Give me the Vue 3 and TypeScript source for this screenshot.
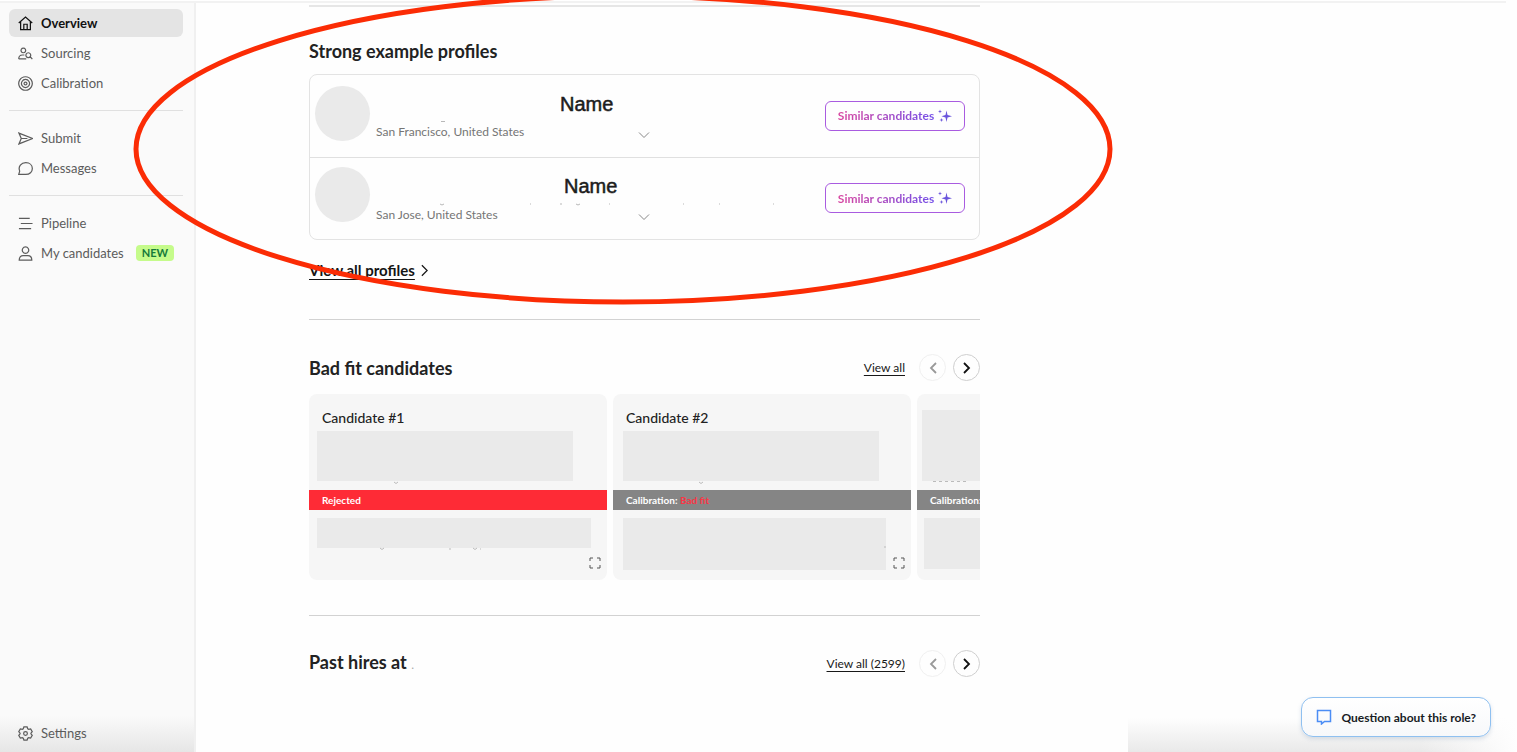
<script setup lang="ts">
interface NavItem { label: string; icon: string; active?: boolean; badge?: string }
interface Profile { id: string; location: string }
interface Candidate { id: string; title?: string; status: string; verdict?: string; rejected?: boolean }

const groups: NavItem[][] = [
  [
    { label: 'Overview', icon: 'home', active: true },
    { label: 'Sourcing', icon: 'sourcing' },
    { label: 'Calibration', icon: 'target' },
  ],
  [
    { label: 'Submit', icon: 'send' },
    { label: 'Messages', icon: 'chat' },
  ],
  [
    { label: 'Pipeline', icon: 'lines' },
    { label: 'My candidates', icon: 'person', badge: 'NEW' },
  ],
]

const icons: Record<string, string> = {
  home: 'M.8 7.500 8 1.200l7.200 6.300M2.800 6v8.500h10.400V6M6.200 14.500V8.800h3.600v5.700',
  sourcing: 'M5.700 2.200a2.500 2.500 0 1 0 .01 0M.8 13.800h8M.8 13.800c0-3 1.500-4.200 4-4.200h2M11 7.200a2.600 2.600 0 1 0 .01 0M13 11.500l2.300 2.500',
  target: 'M8 .8a7.200 7.200 0 1 0 .01 0M8 3.700a4.300 4.300 0 1 0 .01 0M8 6.500a1.500 1.500 0 1 0 .01 0',
  send: 'M1 2.200 15.500 8 1 13.800 3.500 8zM3.500 8h6.500',
  chat: 'M.8 14.300 1.800 10.800C-.2 6 3.500 1.800 8.300 1.800c4.200 0 7 2.700 7 6.200s-2.800 6.300-7 6.300z',
  lines: 'M1 2.500h11.500M3 8h12.500M1 13.500h13',
  person: 'M8 1a3.400 3.400 0 1 0 .01 0M1.300 15c0-3.200 1.800-4.800 4.200-4.800h5c2.400 0 4.200 1.600 4.200 4.800z',
}

const profiles: Profile[] = [
  { id: 'first', location: 'San Francisco, United States' },
  { id: 'second', location: 'San Jose, United States' },
]

const candidates: Candidate[] = [
  { id: 'one', title: 'Candidate #1', status: 'Rejected', rejected: true },
  { id: 'two', title: 'Candidate #2', status: 'Calibration:', verdict: 'Bad fit' },
  { id: 'three', status: 'Calibration:' },
]
</script>

<template>
  <div class="page">
    <div class="topline"></div>
    <div class="shell">
      <aside class="sidebar">
        <nav>
          <ul v-for="(group, g) in groups" :key="g" class="group">
            <li v-for="item in group" :key="item.label">
              <a href="#" class="nav-item" :class="{ active: item.active }">
                <svg class="nav-icon" viewBox="0 0 16 16"><path :d="icons[item.icon]" /></svg>
                <span>{{ item.label }}</span>
                <span v-if="item.badge" class="badge">{{ item.badge }}</span>
              </a>
            </li>
          </ul>
        </nav>
        <a href="#" class="nav-item settings">
          <svg class="nav-icon" viewBox="0 0 16 16">
            <path d="M6.300 1h3.400l.7 2 1 .6 2.100-.4 1.700 2.900L13.800 7.700v.6l1.400 1.600-1.700 2.900-2.100-.4-1 .6-.7 2H6.300l-.7-2-1-.6-2.100.4L.8 9.900l1.400-1.600v-.6L.8 6.100l1.700-2.900 2.100.4 1-.6z" />
            <circle cx="8" cy="8" r="2" />
          </svg>
          <span>Settings</span>
        </a>
      </aside>

      <main class="content">
        <section class="block first-block">
          <h2>Strong example profiles</h2>
          <ul class="profiles">
            <li v-for="p in profiles" :key="p.id" class="profile" :class="p.id">
              <span class="avatar"></span>
              <div class="details">
                <strong class="name">Name</strong>
                <span class="location">{{ p.location }}</span>
                <button class="expand" type="button" aria-label="Expand profile">
                  <svg viewBox="0 0 12 12"><path d="M1 3.500 6 8.500l5-5" /></svg>
                </button>
              </div>
              <button class="similar" type="button">
                <span>Similar candidates</span>
                <svg viewBox="0 0 14 14">
                  <path d="M8.500 1.500 9.500 6 14 7.200 9.500 8.400 8.500 13 7.500 8.400 3.500 7.200 7.500 6z" />
                  <path d="M2 .5 2.500 2 4 2.500 2.500 3 2 4.500 1.500 3 0 2.500 1.500 2z" />
                  <path d="M3.500 9 4 10.500 5.500 11 4 11.500 3.500 13 3 11.500 1.500 11 3 10.500z" />
                </svg>
              </button>
              <svg v-if="p.id === 'first'" class="trace" viewBox="0 0 400 4"><path d="M65 1.500h4" /></svg>
              <svg v-else class="trace" viewBox="0 0 400 4"><path d="M64 1q2 2 4 0M154 1h1M184 1h2M200 1q2 2 4 0M233 1h1M307 1h1M343 1h1M397 1h1" /></svg>
            </li>
          </ul>
          <a href="#" class="all-profiles">
            <span>View all profiles</span>
            <svg viewBox="0 0 8 14"><path d="M1 1l6 6-6 6" /></svg>
          </a>
        </section>

        <section class="block">
          <header class="head">
            <h2>Bad fit candidates</h2>
            <a href="#" class="view-all">View all</a>
            <button class="round muted" type="button" aria-label="Previous candidates"><svg viewBox="0 0 8 12"><path d="M7 1 2 6l5 5" /></svg></button>
            <button class="round" type="button" aria-label="Next candidates"><svg viewBox="0 0 8 12"><path d="M1 1l5 5-5 5" /></svg></button>
          </header>
          <div class="cards">
            <article v-for="c in candidates" :key="c.id" class="card" :class="c.id">
              <div class="upper">
                <h3 v-if="c.title">{{ c.title }}</h3>
                <div class="bar summary"></div>
              </div>
              <p class="status" :class="{ rejected: c.rejected }">{{ c.status }} <em v-if="c.verdict">{{ c.verdict }}</em></p>
              <div class="bar notes"></div>
              <svg v-if="c.id === 'one'" class="marks" viewBox="0 0 298 80"><path d="M85 1q2 3 4 0M71 67q2 3 4 0M140 68h2M164 67q2 3 4 0M171 68h1" /></svg>
              <svg v-else-if="c.id === 'two'" class="marks" viewBox="0 0 298 80"><path d="M86 1q2 3 4 0M272 65v2" /></svg>
              <svg v-else class="marks" viewBox="0 0 298 80"><path d="M16 .5h36" stroke-dasharray="3 3" /></svg>
              <button class="full" type="button" aria-label="Open candidate">
                <svg viewBox="0 0 12 12"><path d="M1 4V1h3M8 1h3v3M11 8v3H8M4 11H1V8" /></svg>
              </button>
            </article>
          </div>
        </section>

        <section class="block">
          <header class="head">
            <h2>Past hires at <span class="dot">.</span></h2>
            <a href="#" class="view-all">View all (2599)</a>
            <button class="round muted" type="button" aria-label="Previous hires"><svg viewBox="0 0 8 12"><path d="M7 1 2 6l5 5" /></svg></button>
            <button class="round" type="button" aria-label="Next hires"><svg viewBox="0 0 8 12"><path d="M1 1l5 5-5 5" /></svg></button>
          </header>
        </section>
      </main>
    </div>

    <div class="corner-shade"></div>
    <button class="question" type="button">
      <svg viewBox="0 0 16 16"><path d="M1.500 1.500h13v11H8.500L5.500 15v-2.500h-4z" /></svg>
      <span>Question about this role?</span>
    </button>
    <svg class="highlight" viewBox="0 0 984 312"><ellipse cx="492" cy="156" rx="487" ry="153" /></svg>
  </div>
</template>

<style>
body { background: #fefefe; }
</style>

<style scoped>
* { box-sizing: border-box; }
.page {
  position: relative;
  min-height: 100vh;
  overflow: hidden;
  color: #222;
  font-family: Lato, "Liberation Sans", sans-serif;
  font-size: 14px;
}
ul { list-style: none; margin: 0; padding: 0; }
h2, h3, p { margin: 0; }
a { color: inherit; }
button { font: inherit; color: inherit; padding: 0; border: 0; background: none; cursor: pointer; }
svg { display: block; fill: none; stroke: currentColor; }
.topline { height: 3px; margin-right: 11px; border-top: 1px solid #fff; background: #f2f2f2; }
.shell { display: flex; min-height: calc(100vh - 3px); }

.sidebar {
  display: flex;
  flex: none;
  flex-direction: column;
  justify-content: space-between;
  width: 196px;
  padding: 6px 11px 5px 9px;
  border-right: 2px solid #f0f0f0;
  background: linear-gradient(to top, #e6e6e6, rgba(250, 250, 250, 0) 36px) #fafafa;
}
.group { display: grid; gap: 2px; }
.group + .group { margin-top: 13px; padding-top: 13px; border-top: 1px solid #e0e0e0; }
.nav-item {
  display: flex;
  align-items: center;
  gap: 8px;
  height: 28px;
  padding: 0 8px 0 9px;
  border-radius: 6px;
  color: #5c5c5c;
  font-size: 13px;
  line-height: 16px;
  text-decoration: none;
  white-space: nowrap;
}
.nav-item.active { background: #e4e4e4; color: #111; font-weight: 700; }
.nav-icon { flex: none; width: 15px; height: 15px; stroke-width: 1.3; }
.badge {
  margin-left: 4px;
  padding: 0 6px;
  border-radius: 4px;
  background: #c5fb8b;
  color: #167a3a;
  font-size: 11px;
  font-weight: 700;
  line-height: 16px;
}

.content { flex: 0 1 784px; min-width: 0; padding: 2px 0 0 113px; }
.block { border-top: 1px solid #d2d2d2; }
.first-block { height: 314px; border-top: 2px solid #e6e6e6; }
h2 { font-size: 18px; font-weight: 700; line-height: 24px; }
.first-block h2 { padding-top: 32px; }
.profiles { margin-top: 11px; border: 1px solid #e3e3e3; border-radius: 8px; }
.profile {
  position: relative;
  display: grid;
  grid-template-columns: 55px minmax(0, 1fr) 140px;
  column-gap: 6px;
  align-items: center;
  height: 82px;
  padding: 0 14px 1px 5px;
}
.profile + .profile { border-top: 1px solid #e0e0e0; }
.avatar { align-self: start; width: 55px; height: 55px; margin-top: 11px; border-radius: 50%; background: #eaeaea; }
.second .avatar { margin-top: 9px; }
.details { display: grid; grid-template-columns: 184px 1fr; grid-template-rows: 28px 28px; align-items: center; padding-top: 4px; }
.name { grid-column: 2; color: #1c1c1c; font: 400 20px/28px "Liberation Sans", sans-serif; -webkit-text-stroke: 0.5px; }
.second .name { margin-left: 4px; }
.location { grid-column: 1; color: #757575; font-size: 12px; white-space: nowrap; }
.expand { width: 12px; height: 12px; margin: 6px 0 0 78px; color: #888; }
.similar {
  display: flex;
  align-items: center;
  justify-content: center;
  gap: 4px;
  height: 30px;
  border: 1px solid #a95be0;
  border-radius: 6px;
  font-size: 12px;
  font-weight: 700;
}
.similar span { background: linear-gradient(90deg, #d946a0, #7450e8); background-clip: text; color: transparent; }
.similar svg { width: 14px; height: 14px; fill: #6a55dc; stroke: none; }
.trace { position: absolute; left: 66px; top: 45px; width: 400px; height: 4px; color: #b8b8b8; }
.all-profiles { display: inline-flex; align-items: center; gap: 6px; margin-top: 19px; color: #151515; font-size: 15px; font-weight: 700; line-height: 22px; text-decoration: none; }
.all-profiles span { text-decoration: underline; text-underline-offset: 3px; }
.all-profiles svg { width: 7px; height: 13px; stroke-width: 1.4; }

.head { display: flex; align-items: center; height: 27px; margin-top: 34px; }
.head h2 { margin-right: auto; }
.dot { color: #aaa; font-size: 12px; font-weight: 400; }
.view-all { margin-right: 14px; color: #181818; font-size: 12px; text-underline-offset: 3px; }
.round {
  display: grid;
  place-items: center;
  width: 27px;
  height: 27px;
  border: 1px solid #cfcfcf;
  border-radius: 50%;
  color: #111;
}
.round.muted { margin-right: 7px; border-color: #f0f0f0; color: #999; }
.round svg { width: 8px; height: 12px; stroke-width: 1.8; }

.cards { display: flex; gap: 6px; margin: 13px 0 35px; overflow: hidden; }
.card { position: relative; flex: 0 0 298px; height: 186px; border-radius: 8px; background: #f6f6f6; }
.upper { display: flex; flex-direction: column; justify-content: flex-end; gap: 3px; height: 96px; padding-bottom: 9px; }
h3 { padding-left: 13px; font-size: 14px; font-weight: 500; line-height: 20px; }
.bar { width: 256px; height: 50px; margin-left: 8px; background: #eaeaea; }
.status { height: 20px; padding-left: 13px; background: #858585; color: #fff; font-size: 10px; font-weight: 700; line-height: 20px; }
.status.rejected { background: #fe2b36; }
.status em { color: #fb3545; font-style: normal; }
.notes { width: 274px; height: 30px; margin-top: 8px; }
.two .bar { margin-left: 10px; }
.two .notes { width: 263px; height: 52px; }
.three .summary { height: 71px; margin-left: 5px; }
.three .notes { height: 51px; margin-left: 7px; }
.marks { position: absolute; left: 0; top: 87px; width: 298px; height: 80px; color: #bbb; }
.full { position: absolute; right: 6px; bottom: 11px; width: 12px; height: 12px; color: #555; }

.corner-shade {
  position: absolute;
  right: 0;
  bottom: 0;
  width: 389px;
  height: 34px;
  background: linear-gradient(to right, rgba(254, 254, 254, 0) 75%, #fefefe), linear-gradient(to top, #e9e9e9, #fefefe);
}
.question {
  position: absolute;
  right: 26px;
  bottom: 15px;
  display: flex;
  align-items: center;
  gap: 9px;
  height: 40px;
  padding: 0 14px;
  border: 1px solid #8fc0f0;
  border-radius: 12px;
  background: linear-gradient(#fff, #f7f8fa);
  box-shadow: 0 2px 4px rgba(90, 120, 160, 0.2);
  color: #171b24;
  font-size: 12px;
  font-weight: 700;
}
.question svg { width: 16px; height: 16px; color: #4b8df5; stroke-width: 1.5; }
.highlight { position: absolute; left: 131px; top: -7px; width: 984px; height: 312px; color: #fb2c05; stroke-width: 5; pointer-events: none; }
</style>
